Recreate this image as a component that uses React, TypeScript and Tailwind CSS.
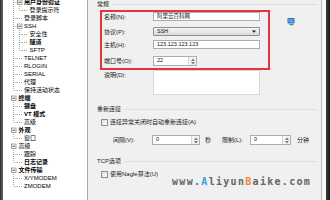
import React from "react";

type G = "n" | "l" | "t" | "e";

type Item = {
  text: string;
  level: number;
  bold?: boolean;
  exp?: boolean;
  guides: G[];
};

const items: Item[] = [
  { text: "用户身份验证", level: 1, bold: true, exp: true, guides: ["t"] },
  { text: "登录提示符", level: 2, guides: ["l", "e"] },
  { text: "登录脚本", level: 1, guides: ["t"] },
  { text: "SSH", level: 1, exp: true, guides: ["t"] },
  { text: "安全性", level: 2, guides: ["l", "t"] },
  { text: "隧道", level: 2, bold: true, guides: ["l", "t"] },
  { text: "SFTP", level: 2, guides: ["l", "e"] },
  { text: "TELNET", level: 1, guides: ["t"] },
  { text: "RLOGIN", level: 1, guides: ["t"] },
  { text: "SERIAL", level: 1, guides: ["t"] },
  { text: "代理", level: 1, guides: ["t"] },
  { text: "保持活动状态", level: 1, guides: ["e"] },
  { text: "终端", level: 0, bold: true, exp: true, guides: [] },
  { text: "键盘", level: 1, bold: true, guides: ["t"] },
  { text: "VT 模式", level: 1, bold: true, guides: ["t"] },
  { text: "高级", level: 1, guides: ["e"] },
  { text: "外观", level: 0, bold: true, exp: true, guides: [] },
  { text: "窗口", level: 1, guides: ["e"] },
  { text: "高级", level: 0, exp: true, guides: [] },
  { text: "跟踪", level: 1, guides: ["t"] },
  { text: "日志记录", level: 1, bold: true, guides: ["e"] },
  { text: "文件传输", level: 0, bold: true, exp: true, guides: [] },
  { text: "X/YMODEM", level: 1, guides: ["t"] },
  { text: "ZMODEM", level: 1, guides: ["e"] },
];

const DOT = "#a0a0a0";

function Guide({ g }: { g: G }) {
  return (
    <svg width="5.5" height="8" className="shrink-0 block">
      {(g === "l" || g === "t") && (
        <line x1="2.5" y1="0" x2="2.5" y2="8" stroke={DOT} strokeWidth="1" strokeDasharray="1 1" />
      )}
      {g === "e" && (
        <line x1="2.5" y1="0" x2="2.5" y2="4" stroke={DOT} strokeWidth="1" strokeDasharray="1 1" />
      )}
      {(g === "t" || g === "e") && (
        <line x1="2.5" y1="4.5" x2="5.5" y2="4.5" stroke={DOT} strokeWidth="1" strokeDasharray="1 1" />
      )}
    </svg>
  );
}

function Tick() {
  return (
    <svg width="7.5" height="8" className="shrink-0 block">
      <line x1="0" y1="4.5" x2="6" y2="4.5" stroke={DOT} strokeWidth="1" strokeDasharray="1 1" />
    </svg>
  );
}

function Expander() {
  return (
    <svg width="7.5" height="8" className="shrink-0 block">
      <rect x="0.5" y="2" width="4.5" height="4.5" fill="#fff" stroke="#8a8a8a" strokeWidth="0.8" />
      <line x1="1.4" y1="4.25" x2="4.1" y2="4.25" stroke="#222" strokeWidth="0.8" />
    </svg>
  );
}

function TreeRow({ it }: { it: Item }) {
  return (
    <div className="flex items-center h-[8px] pl-[8px] whitespace-nowrap">
      {it.guides.map((g, i) => (
        <Guide key={i} g={g} />
      ))}
      {it.exp ? <Expander /> : <Tick />}
      <span className={`text-[6px] leading-[8px] text-black ${it.bold ? "font-bold" : "font-normal"}`}>
        {it.text}
      </span>
    </div>
  );
}

function GroupHeader({ label }: { label: string }) {
  return (
    <div className="flex items-center h-[8px]">
      <span className="text-[6px] leading-[8px] text-[#1a1a1a] whitespace-nowrap">{label}</span>
      <div className="flex-1 h-px bg-[#dcdfe3] ml-[3px]" />
    </div>
  );
}

function TextBox({ value, w }: { value: string; w: string }) {
  return (
    <div className={`${w} h-[9px] bg-white border border-[#abadb3] flex items-center pl-[3px] text-[5.5px] leading-none text-[#111]`}>
      {value}
    </div>
  );
}

function Spinner() {
  return (
    <div className="w-[8px] h-full flex flex-col border-l border-[#d6d6d6] bg-[#f4f4f4]">
      <div className="flex-1 flex items-center justify-center">
        <svg width="4" height="3"><path d="M0 3 L2 0.5 L4 3 Z" fill="#7a7a7a" /></svg>
      </div>
      <div className="flex-1 flex items-center justify-center">
        <svg width="4" height="3"><path d="M0 0 L2 2.5 L4 0 Z" fill="#7a7a7a" /></svg>
      </div>
    </div>
  );
}

function SpinBox({ value, w }: { value: string; w: string }) {
  return (
    <div className={`${w} h-[10px] bg-white border border-[#abadb3] flex items-stretch text-[5.5px] leading-none text-[#111]`}>
      <div className="flex-1 flex items-center pl-[3px]">{value}</div>
      <Spinner />
    </div>
  );
}

function CheckBox() {
  return (
    <div className="w-[7px] h-[7px] border border-[#8f8f8f] bg-[linear-gradient(135deg,#dcdcdc,#ffffff)] shrink-0" />
  );
}

function SessionIcon() {
  return (
    <svg width="9" height="9" viewBox="0 0 9 9" className="block">
      <rect x="0.5" y="1" width="7" height="5.5" rx="0.8" fill="#2f6fc0" />
      <rect x="1.5" y="2" width="5" height="3.3" fill="#7fb7ee" />
      <path d="M2 4.6 L4.5 2.4 L6.4 4.2" stroke="#1d4f9a" strokeWidth="0.8" fill="none" />
      <rect x="2.5" y="7" width="4" height="1.2" fill="#3f7fcf" />
    </svg>
  );
}

export default function App() {
  return (
    <div className="w-[330px] h-[200px] overflow-hidden flex font-['Liberation_Sans','Noto_Sans_CJK_SC',sans-serif] bg-[#f0f0f0]">
      {/* left dark edge */}
      <div className="w-[3px] h-full bg-[linear-gradient(90deg,#2c2c2c,#6a6a6a)] shrink-0" />

      {/* tree */}
      <div className="w-[85px] h-full bg-white border-r border-[#a9abae] shrink-0 overflow-hidden">
        <div className="-mt-[2px]">
          {items.map((it, i) => (
            <TreeRow key={i} it={it} />
          ))}
        </div>
      </div>

      {/* right pane */}
      <div className="relative flex-1 h-full bg-[#f0f0f0] border-r border-[#b9b9b9] pl-[9px] pr-[4px] text-[6px] leading-[8px] text-[#1a1a1a]">
        <GroupHeader label="常规" />

        <div className="flex pl-[7px] mt-[4px]">
          <div className="flex flex-col">
            <div className="flex items-center h-[9px]">
              <span className="w-[49px]">名称(N):</span>
              <TextBox value="阿里云百科网" w="w-[107px]" />
            </div>
            <div className="flex items-center h-[9px] mt-[6px]">
              <span className="w-[49px]">协议(P):</span>
              <div className="w-[107px] h-[9px] border border-[#8e8f8f] rounded-[1px] bg-[linear-gradient(#f6f6f6,#dadada)] flex items-center justify-between pl-[3px] pr-[3px] text-[5.5px] leading-none text-[#111]">
                <span>SSH</span>
                <svg width="4" height="3"><path d="M0 0.5 L2 2.8 L4 0.5 Z" fill="#111" /></svg>
              </div>
            </div>
            <div className="flex items-center h-[9px] mt-[4px]">
              <span className="w-[49px]">主机(H):</span>
              <TextBox value="123.123.123.123" w="w-[107px]" />
            </div>
            <div className="flex items-center h-[10px] mt-[7px]">
              <span className="w-[49px]">端口号(O):</span>
              <SpinBox value="22" w="w-[44px]" />
            </div>
            <div className="flex items-start h-[25px] mt-[4px]">
              <span className="w-[49px] pt-[1px]">说明(D):</span>
              <div className="w-[107px] h-[25px] bg-white border border-[#d9d9d9]" />
            </div>
          </div>
          <div className="ml-[27px] mt-[5px]">
            <SessionIcon />
          </div>
        </div>

        <div className="mt-[10px]">
          <GroupHeader label="重新连接" />
        </div>
        <div className="flex items-center h-[8px] mt-[5px] pl-[4px] gap-[2px]">
          <CheckBox />
          <span className="whitespace-nowrap">连接异常关闭时自动重新连接(A)</span>
        </div>
        <div className="flex items-center h-[10px] mt-[9px] pl-[16px] whitespace-nowrap">
          <span className="w-[39px]">间隔(V):</span>
          <SpinBox value="0" w="w-[48px]" />
          <span className="ml-[5px]">秒</span>
          <span className="ml-[11px] w-[28px]">限制(L):</span>
          <SpinBox value="0" w="w-[41px]" />
          <span className="ml-[6px]">分钟</span>
        </div>

        <div className="mt-[12px]">
          <GroupHeader label="TCP选项" />
        </div>
        <div className="flex items-center h-[8px] mt-[5px] pl-[4px] gap-[2px]">
          <CheckBox />
          <span className="whitespace-nowrap">使用Nagle算法(U)</span>
        </div>

        {/* red annotation box */}
        <div className="absolute left-[12px] top-[10px] w-[170px] h-[60px] border-2 border-[#e2363e] pointer-events-none" />

        {/* watermark */}
        <div className="absolute left-[84px] top-[176px] text-[10px] leading-[12px] font-bold tracking-[1.3px] text-[#666666] font-['DejaVu_Sans_Mono',monospace] whitespace-nowrap">
          www.<span className="text-[#3b9fe0]">A</span>liyun<span className="text-[#f0843a]">B</span>aike.com
        </div>
      </div>

      {/* right light strip + dark edge */}
      <div className="w-[4px] h-full bg-[#f7f7f7] shrink-0" />
      <div className="w-[4px] h-full bg-[linear-gradient(90deg,#3a3a3a,#1a1a1a)] shrink-0" />
    </div>
  );
}
